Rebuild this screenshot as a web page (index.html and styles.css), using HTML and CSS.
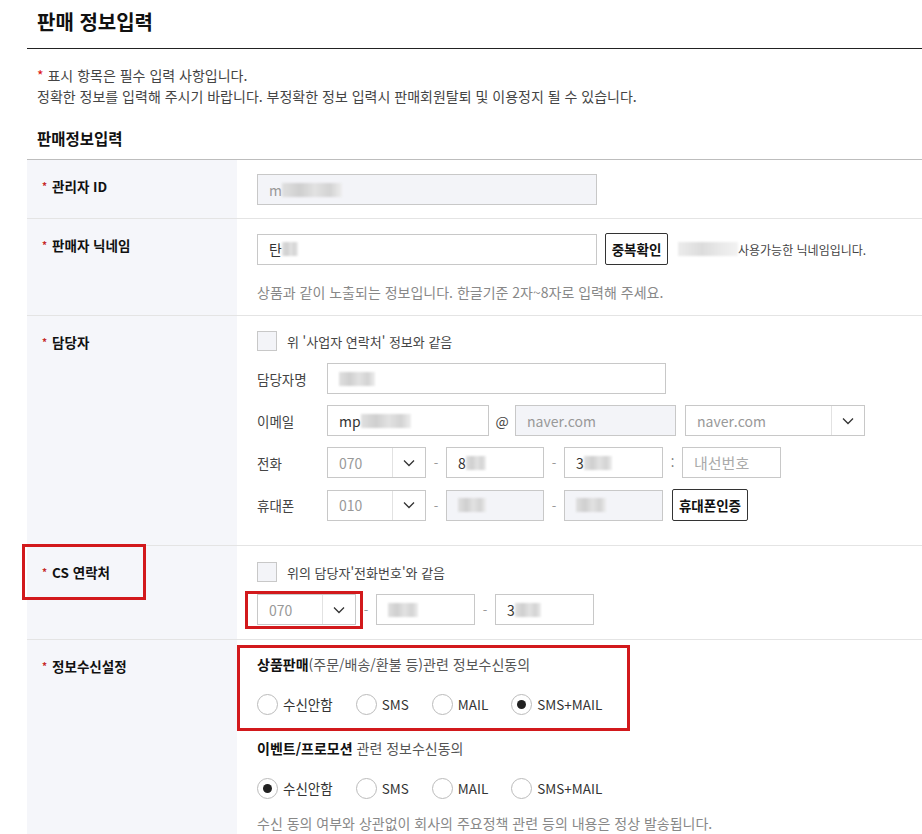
FILE: index.html
```html
<!DOCTYPE html>
<html lang="ko">
<head>
<meta charset="utf-8">
<title>판매 정보입력</title>
<link rel="stylesheet" href="styles.css">
</head>
<body>
<div class="page">
  <h1 class="title">판매 정보입력</h1>
  <div class="notice">
    <p><span class="req">*</span> 표시 항목은 필수 입력 사항입니다.</p>
    <p>정확한 정보를 입력해 주시기 바랍니다. 부정확한 정보 입력시 판매회원탈퇴 및 이용정지 될 수 있습니다.</p>
  </div>
  <h2 class="section">판매정보입력</h2>

  <div class="form">
    <div class="row">
      <div class="label"><span class="star">*</span>관리자 ID</div>
      <div class="field">
        <div class="input disabled w340"><span class="val">m</span><span class="blur bw60"></span></div>
      </div>
    </div>

    <div class="row">
      <div class="label"><span class="star">*</span>판매자 닉네임</div>
      <div class="field">
        <div class="line">
          <div class="input w340"><span class="val dark">탄</span><span class="blur bw16"></span></div>
          <button class="btn w63">중복확인</button>
          <span class="ok"><span class="blur bw60 light"></span>사용가능한 닉네임입니다.</span>
        </div>
        <p class="help mt17">상품과 같이 노출되는 정보입니다. 한글기준 2자~8자로 입력해 주세요.</p>
      </div>
    </div>

    <div class="row">
      <div class="label"><span class="star">*</span>담당자</div>
      <div class="field pt15 pb24">
        <label class="check"><span class="box"></span><span>위 '사업자 연락처' 정보와 같음</span></label>
        <div class="sub">
          <div class="subrow">
            <span class="sublabel">담당자명</span>
            <div class="input w339"><span class="blur bw36"></span></div>
          </div>
          <div class="subrow">
            <span class="sublabel">이메일</span>
            <div class="input w162"><span class="val dark">mp</span><span class="blur bw50"></span></div>
            <span class="at">@</span>
            <div class="input disabled w161"><span class="val">naver.com</span></div>
            <div class="select w180 ml9"><span class="val">naver.com</span><span class="arrow"><svg width="12" height="8" viewBox="0 0 12 8"><path d="M1 1.5l5 5 5-5" fill="none" stroke="#333" stroke-width="1.3"/></svg></span></div>
          </div>
          <div class="subrow">
            <span class="sublabel">전화</span>
            <div class="select w99"><span class="val">070</span><span class="arrow"><svg width="12" height="8" viewBox="0 0 12 8"><path d="M1 1.5l5 5 5-5" fill="none" stroke="#333" stroke-width="1.3"/></svg></span></div>
            <span class="sep">-</span>
            <div class="input w98"><span class="val dark">8</span><span class="blur bw20"></span></div>
            <span class="sep">-</span>
            <div class="input w99"><span class="val dark">3</span><span class="blur bw28"></span></div>
            <span class="sep colon">:</span>
            <div class="input w99"><span class="val ph">내선번호</span></div>
          </div>
          <div class="subrow">
            <span class="sublabel">휴대폰</span>
            <div class="select w99"><span class="val">010</span><span class="arrow"><svg width="12" height="8" viewBox="0 0 12 8"><path d="M1 1.5l5 5 5-5" fill="none" stroke="#333" stroke-width="1.3"/></svg></span></div>
            <span class="sep">-</span>
            <div class="input disabled w98"><span class="blur bw28"></span></div>
            <span class="sep">-</span>
            <div class="input disabled w99"><span class="blur bw30"></span></div>
            <button class="btn w76 ml9">휴대폰인증</button>
          </div>
        </div>
      </div>
    </div>

    <div class="row">
      <div class="label"><span class="star">*</span>CS 연락처</div>
      <div class="field pt16 pb14">
        <label class="check"><span class="box"></span><span>위의 담당자'전화번호'와 같음</span></label>
        <div class="subrow mt12">
          <div class="select w99"><span class="val">070</span><span class="arrow"><svg width="12" height="8" viewBox="0 0 12 8"><path d="M1 1.5l5 5 5-5" fill="none" stroke="#333" stroke-width="1.3"/></svg></span></div>
          <span class="sep">-</span>
          <div class="input w99"><span class="blur bw30"></span></div>
          <span class="sep">-</span>
          <div class="input w99"><span class="val dark">3</span><span class="blur bw26"></span></div>
        </div>
      </div>
    </div>

    <div class="row tall">
      <div class="label"><span class="star">*</span>정보수신설정</div>
      <div class="field">
        <p class="agree"><b>상품판매</b>(주문/배송/환불 등)관련 정보수신동의</p>
        <div class="radios mt20">
          <label class="radio"><span class="dot"></span>수신안함</label>
          <label class="radio"><span class="dot"></span>SMS</label>
          <label class="radio"><span class="dot"></span>MAIL</label>
          <label class="radio"><span class="dot on"></span>SMS+MAIL</label>
        </div>
        <p class="agree mt24"><b>이벤트/프로모션</b> 관련 정보수신동의</p>
        <div class="radios mt20">
          <label class="radio"><span class="dot on"></span>수신안함</label>
          <label class="radio"><span class="dot"></span>SMS</label>
          <label class="radio"><span class="dot"></span>MAIL</label>
          <label class="radio"><span class="dot"></span>SMS+MAIL</label>
        </div>
        <p class="help mt15">수신 동의 여부와 상관없이 회사의 주요정책 관련 등의 내용은 정상 발송됩니다.</p>
      </div>
    </div>
  </div>

  <div class="mark m1"></div>
  <div class="mark m2"></div>
  <div class="mark m3"></div>
</div>
</body>
</html>
```

FILE: styles.css
```css
* { box-sizing: border-box; margin: 0; padding: 0; }
body {
  font-family: "Noto Sans CJK KR", "Noto Sans", sans-serif;
  font-size: 13px;
  color: #333;
  background: #fff;
}
.page {
  position: relative;
  padding-left: 27px;
  width: 922px;
  height: 834px;
  overflow: hidden;
}
.title {
  font-size: 20px;
  font-weight: 700;
  color: #111;
  height: 49px;
  line-height: 44px;
  padding-left: 10px;
  border-bottom: 1px solid #222;
}
.notice {
  padding: 16px 10px 0;
  line-height: 21px;
  font-size: 14px;
  color: #444;
}
.req { color: #d11; }
.section {
  font-size: 15.5px;
  font-weight: 700;
  color: #111;
  line-height: 20px;
  padding-left: 10px;
  margin-top: 21px;
  margin-bottom: 11px;
}
.form { border-top: 1px solid #bdbdbd; }
.row {
  display: grid;
  grid-template-columns: 210px 1fr;
  border-bottom: 1px solid #e4e4e4;
}
.row.tall { min-height: 260px; }
.label {
  background: #f5f6fa;
  padding: 15px 0 0 15px;
  font-weight: 700;
  color: #111;
  font-size: 13.5px;
  line-height: 22px;
  display: flex;
  align-items: flex-start;
}
.star {
  color: #c62828;
  font-size: 10px;
  line-height: 22px;
  margin-right: 5px;
}
.field { padding: 14px 20px 13px; }
.pt15 { padding-top: 15px; }
.pt16 { padding-top: 16px; }
.pb24 { padding-bottom: 24px; }
.pb14 { padding-bottom: 14px; }
.line, .subrow { display: flex; align-items: center; }
.input, .select {
  height: 31px;
  border: 1px solid #c8c8c8;
  background: #fff;
  display: flex;
  align-items: center;
  padding-left: 11px;
  font-size: 14px;
  color: #999;
  flex: none;
}
.input.disabled { background: #f3f4f8; }
.val { color: #999; }
.val.dark { color: #333; }
.val.ph { color: #aaa; font-size: 15px; }
.select { padding-left: 0; }
.select .val { flex: 1; padding-left: 11px; }
.select .arrow {
  width: 33px;
  height: 100%;
  border-left: 1px solid #e2e2e2;
  display: flex;
  align-items: center;
  justify-content: center;
}
.w340 { width: 340px; }
.w339 { width: 339px; }
.w162 { width: 162px; }
.w161 { width: 161px; }
.w180 { width: 180px; }
.w99 { width: 99px; }
.w98 { width: 98px; }
.w63 { width: 63px; }
.w76 { width: 76px; }
.ml9 { margin-left: 9px; }
.mt12 { margin-top: 12px; }
.mt15 { margin-top: 15px; }
.mt17 { margin-top: 17px; }
.mt20 { margin-top: 20px; }
.mt24 { margin-top: 24px; }
.blur {
  display: inline-block;
  height: 14px;
  background: linear-gradient(90deg, #e0e0e0 0%, #cfcfcf 30%, #e2e2e2 55%, #d3d3d3 80%, #eeeeee 100%);
  filter: blur(1.2px);
}
.blur.light { background: linear-gradient(90deg, #ececec, #dcdcdc 40%, #e9e9e9 70%, #f2f2f2); }
.bw16 { width: 16px; }
.bw20 { width: 20px; }
.bw26 { width: 26px; }
.bw28 { width: 28px; }
.bw30 { width: 30px; }
.bw36 { width: 36px; }
.bw50 { width: 50px; }
.bw60 { width: 60px; }
.btn {
  height: 32px;
  border: 1px solid #333;
  border-radius: 2px;
  background: #fff;
  font-family: inherit;
  font-size: 13.5px;
  font-weight: 700;
  color: #111;
  padding: 0;
  flex: none;
}
.line .btn { margin-left: 8px; }
.ok {
  display: flex;
  align-items: center;
  margin-left: 10px;
  color: #444;
  font-size: 12px;
}
.help { color: #888; line-height: 20px; font-size: 14px; }
.check {
  display: flex;
  align-items: center;
  height: 20px;
  color: #444;
}
.box {
  width: 20px;
  height: 20px;
  border: 1px solid #c8c8c8;
  background: #f3f4f8;
  margin-right: 10px;
}
.sub { margin-top: 12px; display: flex; flex-direction: column; gap: 11px; }
.sublabel { width: 70px; color: #444; flex: none; font-size: 13.5px; }
.at { width: 26px; text-align: center; font-size: 14px; color: #444; }
.sep { width: 20px; text-align: center; color: #999; flex: none; }
.sep.colon { width: 19px; color: #666; }
.agree { line-height: 20px; color: #555; font-size: 14px; }
.agree b { color: #111; }
.radios { display: flex; align-items: center; gap: 23px; height: 20px; }
.radio { display: flex; align-items: center; color: #333; font-size: 13.5px; }
.dot {
  width: 21px;
  height: 21px;
  border: 1px solid #bbb;
  border-radius: 50%;
  margin-right: 5px;
  display: flex;
  align-items: center;
  justify-content: center;
  background: #fff;
}
.dot.on::after {
  content: "";
  width: 9px;
  height: 9px;
  border-radius: 50%;
  background: #222;
}
.mark {
  position: absolute;
  border: 3px solid #d2191c;
}
.m1 { left: 22px; top: 544px; width: 124px; height: 56px; }
.m2 { left: 245px; top: 591px; width: 118px; height: 38px; }
.m3 { left: 237px; top: 645px; width: 393px; height: 86px; }
```
